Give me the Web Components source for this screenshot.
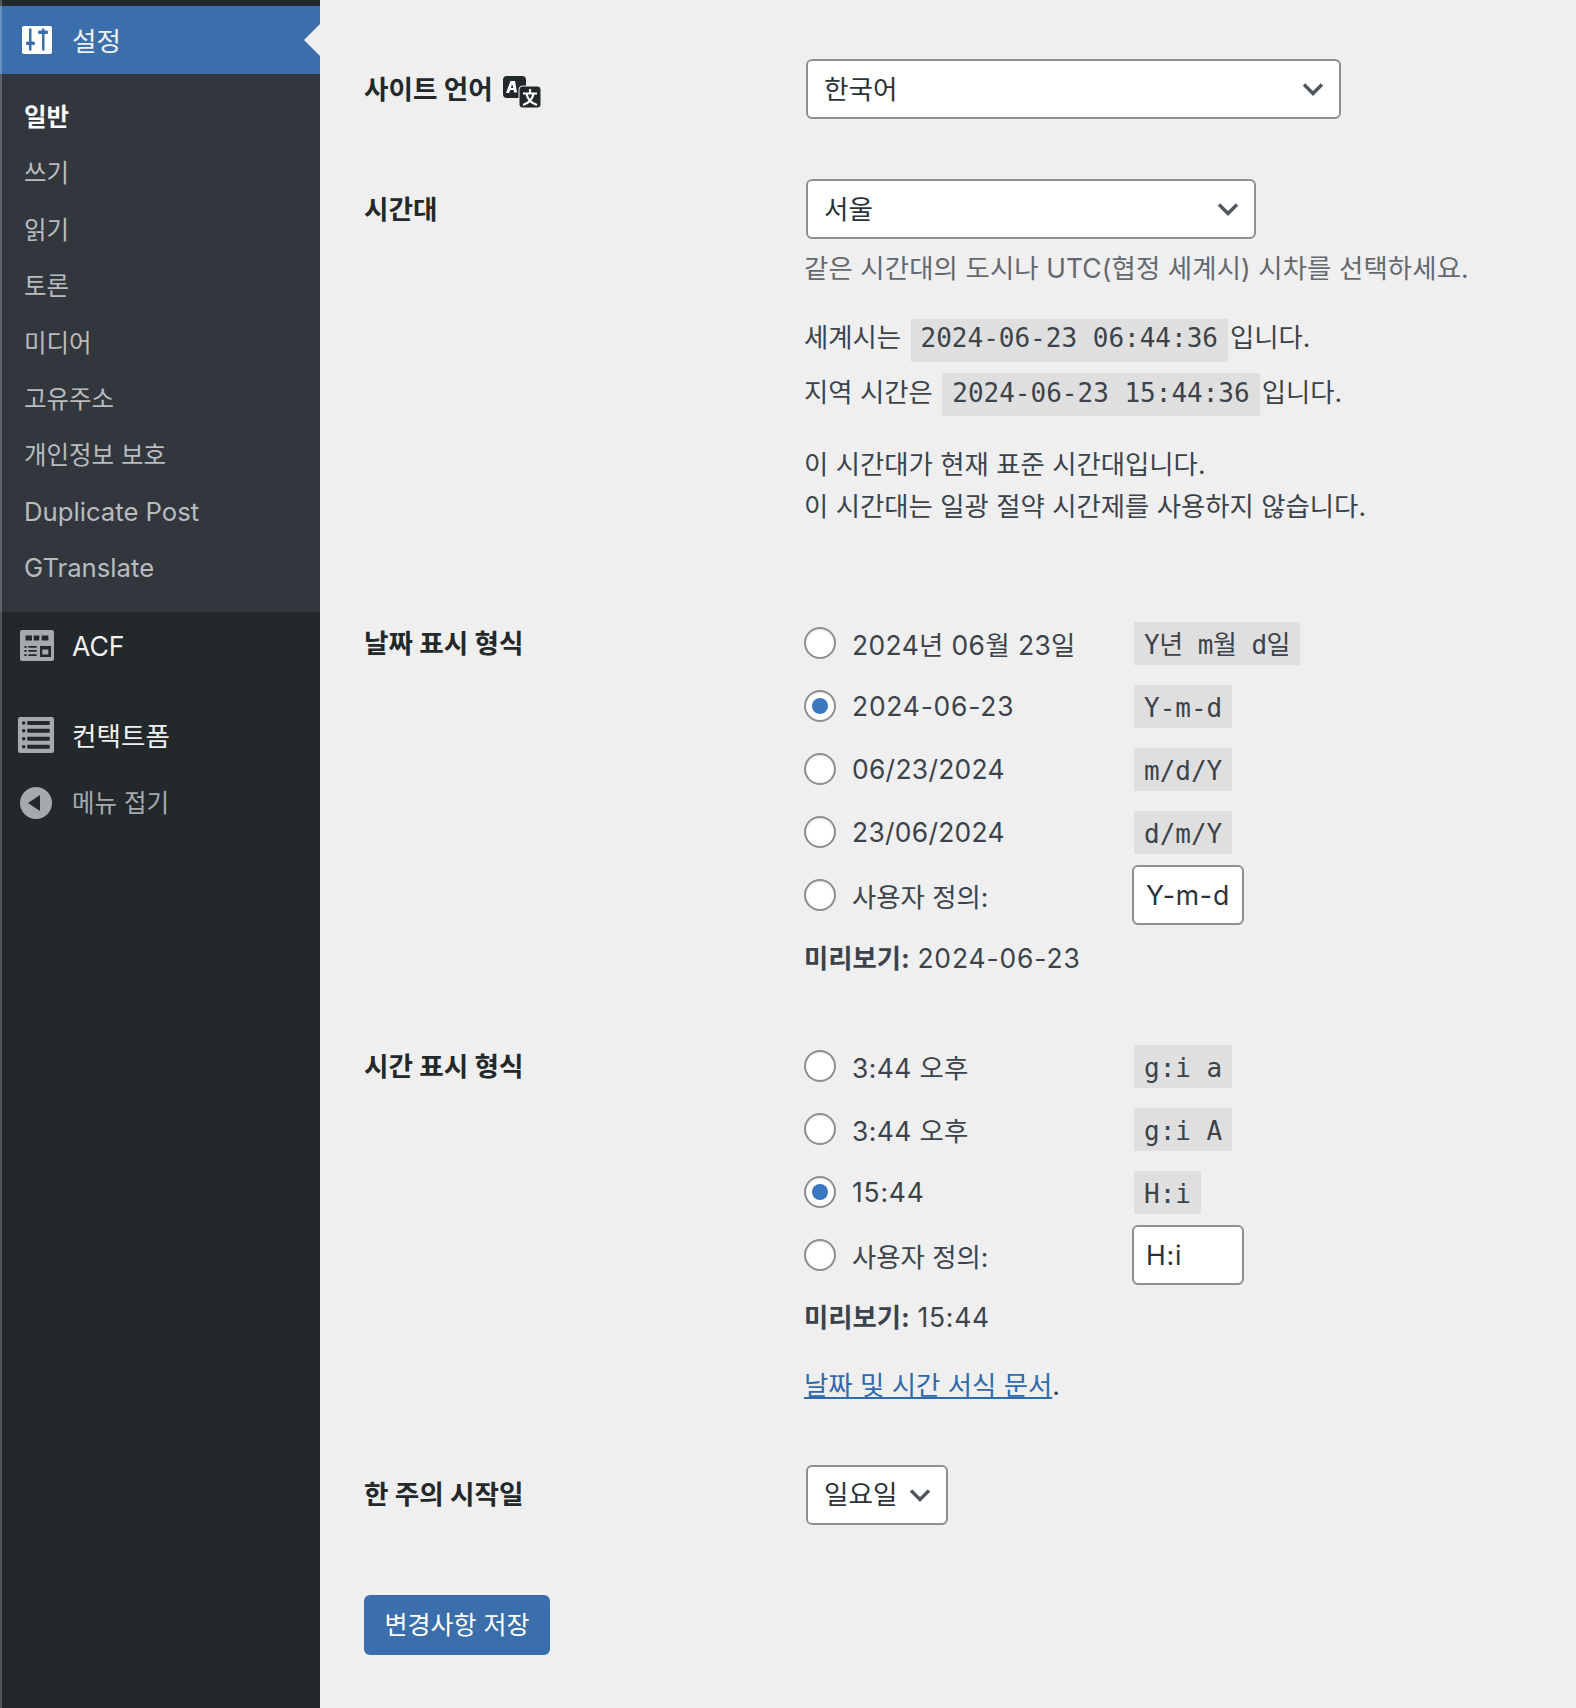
<!DOCTYPE html>
<html lang="ko">
<head>
<meta charset="utf-8">
<title>일반 설정</title>
<style>
  html, body { margin: 0; padding: 0; }
  body {
    width: 1576px; height: 1708px; overflow: hidden; background: #efefef;
    font-family: Inter, "Noto Sans CJK KR", sans-serif; color: #3c434a;
    display: grid; grid-template-columns: 320px 1fr;
  }
</style>
</head>
<body>
<wp-sidebar>
  <wp-menu-item slot="top" active label="설정">
    <svg slot="icon" width="30" height="28" viewBox="0 0 30 28" style="margin-left:2px">
      <rect width="30" height="28" rx="2" fill="#fff"/>
      <g fill="#3a6fac">
        <rect x="7" y="2.500" width="2.500" height="22"/><rect x="4" y="15.500" width="9" height="3.500" rx="1.500"/>
        <rect x="20" y="2.500" width="2.500" height="22"/><rect x="16" y="4.500" width="10" height="3.500" rx="1.500"/>
      </g>
    </svg>
  </wp-menu-item>
  <wp-sub-item current>일반</wp-sub-item>
  <wp-sub-item>쓰기</wp-sub-item>
  <wp-sub-item>읽기</wp-sub-item>
  <wp-sub-item>토론</wp-sub-item>
  <wp-sub-item>미디어</wp-sub-item>
  <wp-sub-item>고유주소</wp-sub-item>
  <wp-sub-item>개인정보 보호</wp-sub-item>
  <wp-sub-item latin>Duplicate Post</wp-sub-item>
  <wp-sub-item latin>GTranslate</wp-sub-item>
  <wp-menu-item slot="bottom" label="ACF">
    <svg slot="icon" width="34" height="31" viewBox="0 0 34 31">
      <path fill="#a7aaad" fill-rule="evenodd" d="M2 0h30a2 2 0 0 1 2 2v27a2 2 0 0 1-2 2H2a2 2 0 0 1-2-2V2a2 2 0 0 1 2-2zM5.500 5.500v5h6.500v-5zM13.700 5.500v5h5.600v-5zM21.700 5.500v5h6.700v-5zM4.300 16v1.800h2.400V16zM8.300 16v1.800h8.400V16zM4.300 20v1.800h2.400V20zM8.300 20v1.800h8.400V20zM4.300 24.200V26h2.400v-1.800zM8.300 24.200V26h8.400v-1.800zM20 16v11h11V16zM22.300 19.500h6v5h-6z"/>
    </svg>
  </wp-menu-item>
  <wp-menu-item slot="bottom" label="컨택트폼" style="margin-top:21px">
    <svg slot="icon" width="36" height="36" viewBox="0 0 36 36" style="margin-left:-2px">
      <path fill="#a7aaad" fill-rule="evenodd" d="M2 0h32a2 2 0 0 1 2 2v32a2 2 0 0 1-2 2H2a2 2 0 0 1-2-2V2a2 2 0 0 1 2-2zM9.300 4v4h22.400V4zM9.300 11.800v4h22.400v-4zM9.300 19.700v4h22.400v-4zM9.300 27.700v4h22.400v-4zM5.700 4.200a1.800 1.800 0 1 0 0 3.600 1.800 1.800 0 0 0 0-3.600zM5.700 12a1.800 1.800 0 1 0 0 3.600 1.800 1.800 0 0 0 0-3.600zM5.700 19.900a1.800 1.800 0 1 0 0 3.600 1.800 1.800 0 0 0 0-3.600zM5.700 27.900a1.800 1.800 0 1 0 0 3.600 1.800 1.800 0 0 0 0-3.600z"/>
    </svg>
  </wp-menu-item>
  <wp-menu-item slot="bottom" muted label="메뉴 접기">
    <svg slot="icon" width="32" height="32" viewBox="0 0 32 32">
      <circle cx="16" cy="16" r="16" fill="#a7aaad"/>
      <path fill="#23282b" d="M8 16l12-8v16z"/>
    </svg>
  </wp-menu-item>
</wp-sidebar>

<wp-settings>
  <wp-row style="margin-top:59px">
    <wp-label slot="label" center>사이트 언어
      <svg width="38" height="32" viewBox="0 0 38 32" style="margin-left:10px">
        <rect width="23" height="22" rx="4" fill="#23282b"/>
        <path fill="#fff" d="M7.500 5h4.500l2 11.500h-3l-.3-2.500H7.400L6 17H3zM9 8l-1 4h2.300z"/>
        <rect x="16" y="10" width="22" height="22" rx="3.500" fill="#23282b" stroke="#efefef" stroke-width="1"/>
        <path fill="none" stroke="#fff" stroke-width="2.200" d="M27 13v4M20 17.500h14M23.500 18c1 4.500 4.500 9 10.500 11M30.500 18c-1 4.500-4.500 9-10.500 11"/>
      </svg>
    </wp-label>
    <wp-select style="width:535px">한국어</wp-select>
  </wp-row>

  <wp-row style="margin-top:60px">
    <wp-label slot="label" center>시간대</wp-label>
    <wp-select style="width:450px">서울</wp-select>
    <wp-line style="margin-top:9px;color:#646970;letter-spacing:.12px">같은 시간대의 도시나 UTC(협정 세계시) 시차를 선택하세요.</wp-line>
    <wp-line style="margin-top:28px">세계시는 <wp-code style="margin-left:2px;margin-right:2px;--code-lh:39px">2024-06-23 06:44:36</wp-code>입니다.</wp-line>
    <wp-line style="margin-top:14px">지역 시간은 <wp-code style="margin-left:2px;margin-right:2px;--code-lh:41px">2024-06-23 15:44:36</wp-code>입니다.</wp-line>
    <wp-line style="margin-top:30.500px">이 시간대가 현재 표준 시간대입니다.</wp-line>
    <wp-line style="margin-top:1px">이 시간대는 일광 절약 시간제를 사용하지 않습니다.</wp-line>
  </wp-row>

  <wp-row style="margin-top:85px">
    <wp-label slot="label" tall>날짜 표시 형식</wp-label>
    <wp-radio style="letter-spacing:.4px">2024년 06월 23일<wp-code slot="code" style="letter-spacing:-.5px">Y년 m월 d일</wp-code></wp-radio>
    <wp-radio checked style="letter-spacing:.8px">2024-06-23<wp-code slot="code">Y-m-d</wp-code></wp-radio>
    <wp-radio style="letter-spacing:.3px">06/23/2024<wp-code slot="code">m/d/Y</wp-code></wp-radio>
    <wp-radio style="letter-spacing:.3px">23/06/2024<wp-code slot="code">d/m/Y</wp-code></wp-radio>
    <wp-radio>사용자 정의:<wp-field slot="code">Y-m-d</wp-field></wp-radio>
    <wp-line style="margin-top:11px"><b>미리보기:</b> <span style="letter-spacing:.9px">2024-06-23</span></wp-line>
  </wp-row>

  <wp-row style="margin-top:56px">
    <wp-label slot="label" tall>시간 표시 형식</wp-label>
    <wp-radio style="letter-spacing:.4px">3:44 오후<wp-code slot="code">g:i a</wp-code></wp-radio>
    <wp-radio style="letter-spacing:.4px">3:44 오후<wp-code slot="code">g:i A</wp-code></wp-radio>
    <wp-radio checked style="letter-spacing:.8px">15:44<wp-code slot="code">H:i</wp-code></wp-radio>
    <wp-radio>사용자 정의:<wp-field slot="code">H:i</wp-field></wp-radio>
    <wp-line style="margin-top:10px"><b>미리보기:</b> <span style="letter-spacing:.8px">15:44</span></wp-line>
    <wp-line style="margin-top:27px"><a href="#" style="color:#2f6aad">날짜 및 시간 서식 문서</a>.</wp-line>
  </wp-row>

  <wp-row style="margin-top:59px">
    <wp-label slot="label" center>한 주의 시작일</wp-label>
    <wp-select style="width:142px">일요일</wp-select>
  </wp-row>

  <wp-button>변경사항 저장</wp-button>
</wp-settings>

<script>
// small helper, every element is just a shadow root with its own css
class Base extends HTMLElement {
  constructor() {
    super();
    this.attachShadow({ mode: 'open' });
    this.shadowRoot.innerHTML = this.markup();
  }
}

const chevron = `<svg width="24" height="16" viewBox="0 0 24 16"><path d="M3 3.500l9 9 9-9" fill="none" stroke="#50575e" stroke-width="3.400"/></svg>`;

class WpSidebar extends Base {
  markup() {
    return `
      <style>
        :host { display: block; position: relative; background: #23282b; height: 1708px; padding-top: 6px; box-sizing: border-box; }
        :host::before { content: ''; position: absolute; left: 0; top: 0; bottom: 0; width: 2px; background: rgba(255,255,255,.22); z-index: 2; }
        .sub { background: #32373e; padding: 14px 0 16px; }
      </style>
      <slot name="top"></slot>
      <div class="sub"><slot></slot></div>
      <slot name="bottom"></slot>
    `;
  }
}
customElements.define('wp-sidebar', WpSidebar);

class WpMenuItem extends Base {
  markup() {
    const active = this.hasAttribute('active');
    const muted = this.hasAttribute('muted');
    return `
      <style>
        :host { display: block; position: relative; }
        .item {
          height: 68px; display: flex; align-items: center; padding-left: 20px;
          font-size: ${muted ? 24.5 : 26.6}px; color: ${muted ? '#a7aaad' : '#f0f0f1'};
          background: ${active ? '#3a6fac' : 'transparent'};
        }
        .icon { width: 52px; display: flex; align-items: center; }
        .text { padding-bottom: ${active || muted ? 2 : 0}px; }
        .arrow {
          position: absolute; right: 0; top: 18px; width: 0; height: 0;
          border: 16px solid transparent; border-right-color: #efefef; border-left: 0;
          display: ${active ? 'block' : 'none'};
        }
      </style>
      <div class="item">
        <span class="icon"><slot name="icon"></slot></span>
        <span class="text">${this.getAttribute('label')}</span>
      </div>
      <div class="arrow"></div>
    `;
  }
}
customElements.define('wp-menu-item', WpMenuItem);

class WpSubItem extends Base {
  markup() {
    const cur = this.hasAttribute('current');
    const latin = this.hasAttribute('latin');
    return `
      <style>
        :host {
          display: flex; align-items: center; height: 56.400px; padding-left: 24px; box-sizing: border-box;
          padding-bottom: ${latin ? 0 : 1.5}px; padding-top: ${latin ? 1 : 0}px;
          font-size: ${latin ? 25.7 : 24.5}px; color: ${cur ? '#fff' : '#b9bcbf'}; font-weight: ${cur ? 700 : 400};
        }
      </style>
      <slot></slot>
    `;
  }
}
customElements.define('wp-sub-item', WpSubItem);

class WpSettings extends Base {
  markup() {
    return `
      <style>
        :host { display: block; padding-left: 44px; font-size: 26.4px; }
      </style>
      <slot></slot>
    `;
  }
}
customElements.define('wp-settings', WpSettings);

class WpRow extends Base {
  markup() {
    return `
      <style>
        :host { display: grid; grid-template-columns: 440px 1fr; align-items: start; }
        .field { display: flex; flex-direction: column; align-items: flex-start; }
      </style>
      <slot name="label"></slot>
      <div class="field"><slot></slot></div>
    `;
  }
}
customElements.define('wp-row', WpRow);

class WpLabel extends Base {
  markup() {
    const h = this.hasAttribute('tall') ? 63 : 60;
    return `
      <style>
        :host {
          display: flex; align-items: center; height: ${h}px; padding-bottom: 4px; box-sizing: border-box;
          font-size: 26.6px; font-weight: 700; color: #23282b;
        }
        ::slotted(svg) { margin-top: 10px; }
      </style>
      <slot></slot>
    `;
  }
}
customElements.define('wp-label', WpLabel);

class WpSelect extends Base {
  markup() {
    return `
      <style>
        :host {
          display: flex; align-items: center; justify-content: space-between; box-sizing: border-box;
          height: 60px; margin-left: 2px; padding: 0 14px 0 16px; background: #fff;
          border: 2px solid #8c8f94; border-radius: 6px; color: #2c3338; font-size: 26.6px;
        }
        span { padding-bottom: 4px; }
      </style>
      <span><slot></slot></span>${chevron}
    `;
  }
}
customElements.define('wp-select', WpSelect);

class WpLine extends Base {
  markup() {
    return `
      <style>
        :host { display: block; height: 41px; line-height: 41px; font-size: 26.4px; white-space: nowrap; }
      </style>
      <slot></slot>
    `;
  }
}
customElements.define('wp-line', WpLine);

class WpCode extends Base {
  markup() {
    return `
      <style>
        :host {
          display: inline-block; box-sizing: border-box; height: 43px; line-height: var(--code-lh, 46px); padding: 0 10px;
          background: #dfdfdf; color: #3c434a; vertical-align: baseline; letter-spacing: 0;
          font-family: "DejaVu Sans Mono", "Noto Sans CJK KR", monospace; font-size: 26px;
        }
        span { white-space: pre; }
      </style>
      <span><slot></slot></span>
    `;
  }
}
customElements.define('wp-code', WpCode);

class WpField extends Base {
  markup() {
    return `
      <style>
        :host {
          display: flex; align-items: center; box-sizing: border-box; width: 112px; height: 60px;
          margin-left: -2px; padding-left: 12px; background: #fff; border: 2px solid #8c8f94;
          border-radius: 6px; color: #2c3338; font-size: 26.6px; letter-spacing: .8px;
        }
      </style>
      <slot></slot>
    `;
  }
}
customElements.define('wp-field', WpField);

class WpRadio extends Base {
  markup() {
    const on = this.hasAttribute('checked');
    return `
      <style>
        :host { display: grid; grid-template-columns: 330px auto; align-items: center; height: 63px; width: 100%; }
        .left { display: flex; align-items: center; gap: 16px; white-space: nowrap; }
        .dot {
          box-sizing: border-box; width: 32px; height: 32px; border-radius: 50%; background: #fff;
          border: 2px solid #8c8f94; display: flex; align-items: center; justify-content: center;
          box-shadow: inset 0 1px 2px rgba(0,0,0,.1);
        }
        .dot i { display: ${on ? 'block' : 'none'}; width: 16px; height: 16px; border-radius: 50%; background: #3c78c0; }
      </style>
      <div class="left"><span class="dot"><i></i></span><span><slot></slot></span></div>
      <div style="display:flex"><slot name="code"></slot></div>
    `;
  }
}
customElements.define('wp-radio', WpRadio);

class WpButton extends Base {
  markup() {
    return `
      <style>
        :host {
          display: inline-flex; align-items: center; justify-content: center; box-sizing: border-box;
          width: 186px; height: 60px; margin-top: 70px; padding-bottom: 3px; background: #3a6fac; color: #fff;
          border-radius: 6px; font-size: 25px;
        }
      </style>
      <slot></slot>
    `;
  }
}
customElements.define('wp-button', WpButton);
</script>
</body>
</html>
